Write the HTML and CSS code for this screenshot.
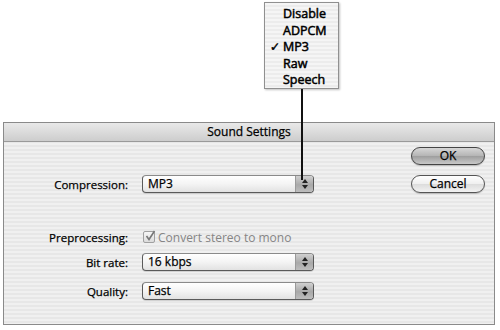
FILE: index.html
```html
<!DOCTYPE html>
<html>
<head>
<meta charset="utf-8">
<link rel="stylesheet" href="styles.css">
</head>
<body>
<div class="page">
  <div class="window">
    <div class="titlebar">Sound Settings</div>
    <div class="content">
      <div class="form">
        <div class="row comp">
          <div class="label">Compression:</div>
          <div class="popup"><span class="value">MP3</span><span class="stepper"><svg width="8" height="12" viewBox="0 0 8 12"><path d="M4 1 L7 5 L1 5 Z M4 11 L7 7 L1 7 Z" fill="#222"/></svg></span></div>
        </div>
        <div class="row prep">
          <div class="label">Preprocessing:</div>
          <div class="check"><span class="box"><svg width="12" height="12" viewBox="0 0 12 12"><path d="M2.5 6 L5 9.5 L10.5 1" fill="none" stroke="#777" stroke-width="1.6"/></svg></span><span class="checktext">Convert stereo to mono</span></div>
        </div>
        <div class="row bit">
          <div class="label">Bit rate:</div>
          <div class="popup"><span class="value">16 kbps</span><span class="stepper"><svg width="8" height="12" viewBox="0 0 8 12"><path d="M4 1 L7 5 L1 5 Z M4 11 L7 7 L1 7 Z" fill="#222"/></svg></span></div>
        </div>
        <div class="row qual">
          <div class="label">Quality:</div>
          <div class="popup"><span class="value">Fast</span><span class="stepper"><svg width="8" height="12" viewBox="0 0 8 12"><path d="M4 1 L7 5 L1 5 Z M4 11 L7 7 L1 7 Z" fill="#222"/></svg></span></div>
        </div>
      </div>
      <div class="buttons">
        <div class="btn default">OK</div>
        <div class="btn">Cancel</div>
      </div>
    </div>
  </div>
  <div class="menu">
    <div class="item">Disable</div>
    <div class="item">ADPCM</div>
    <div class="item checked"><span class="mark">✓</span>MP3</div>
    <div class="item">Raw</div>
    <div class="item">Speech</div>
  </div>
  <div class="connector"></div>
</div>
</body>
</html>
```

FILE: styles.css
```css
html, body {
  margin: 0;
  padding: 0;
  background: #ffffff;
}
body {
  font-family: "Open Sans", "DejaVu Sans", sans-serif;
  font-size: 11.5px;
  color: #111;
}
.page {
  position: relative;
  width: 500px;
  height: 330px;
  overflow: hidden;
}
.window {
  box-sizing: border-box;
  margin: 122px 0 0 3px;
  width: 492px;
  height: 203px;
  border: 1px solid #8a8a8a;
  background: repeating-linear-gradient(to bottom, #f0f0f0 0px, #f0f0f0 2px, #e7e7e7 2px, #e7e7e7 4px);
}
.titlebar {
  height: 18px;
  line-height: 18px;
  text-align: center;
  font-size: 12px;
  color: #000;
  -webkit-text-stroke: 0.25px #000;
  background: linear-gradient(to bottom, #e9e9e9, #cdcdcd);
  border-bottom: 1px solid #9a9a9a;
}
.content {
  display: flex;
  justify-content: space-between;
}
.form {
  display: flex;
  flex-direction: column;
}
.row {
  display: flex;
  align-items: center;
  height: 18px;
}
.row.comp { margin-top: 33px; }
.row.prep { margin-top: 35px; }
.row.bit { margin-top: 7px; }
.row.qual { margin-top: 11px; }
.label {
  width: 124px;
  margin-right: 14px;
  text-align: right;
  color: #000;
  -webkit-text-stroke: 0.25px #000;
}
.popup {
  box-sizing: border-box;
  width: 172px;
  height: 18px;
  display: flex;
  align-items: stretch;
  border: 1px solid #5a5a5a;
  border-top-color: #8a8a8a;
  border-radius: 4px;
  background: linear-gradient(to bottom, #ffffff 0%, #f4f4f4 50%, #e2e2e2 100%);
  box-shadow: 0 1px 0 rgba(0,0,0,0.12);
  overflow: hidden;
}
.popup .value {
  flex: 1;
  padding-left: 5px;
  line-height: 16px;
  color: #000;
  font-size: 12px;
  -webkit-text-stroke: 0.25px #000;
}
.stepper {
  width: 17px;
  display: flex;
  align-items: center;
  justify-content: center;
  background: linear-gradient(to bottom, #d0d0d0, #a9a9a9 55%, #bdbdbd);
  border-left: 1px solid #9a9a9a;
}
.check {
  display: flex;
  align-items: center;
}
.box {
  box-sizing: border-box;
  width: 12px;
  height: 12px;
  margin-left: 1px;
  border: 1px solid #a0a0a0;
  border-radius: 2px;
  background: linear-gradient(to bottom, #f6f6f6, #dcdcdc);
  display: flex;
  align-items: center;
  justify-content: center;
  overflow: visible;
}
.box svg {
  flex: none;
  margin-top: -3px;
  margin-left: 1px;
}
.checktext {
  margin-left: 3px;
  color: #858585;
  font-size: 12px;
}
.buttons {
  display: flex;
  flex-direction: column;
  gap: 10px;
  padding-top: 5px;
  margin-right: 9px;
}
.btn {
  box-sizing: border-box;
  width: 74px;
  height: 18px;
  line-height: 16px;
  text-align: center;
  border: 1px solid #555;
  border-radius: 9px;
  font-size: 12px;
  color: #000;
  -webkit-text-stroke: 0.25px #000;
  background: linear-gradient(to bottom, #ffffff 0%, #efefef 50%, #dcdcdc 51%, #f2f2f2 100%);
  box-shadow: 0 1px 1px rgba(0,0,0,0.2);
}
.btn.default {
  background: linear-gradient(to bottom, #d6d6d6 0%, #b4b4b4 50%, #9e9e9e 51%, #c8c8c8 100%);
  border-color: #444;
}
.menu {
  position: absolute;
  left: 264px;
  top: 2px;
  box-sizing: border-box;
  width: 75px;
  height: 87px;
  padding-top: 3px;
  border: 1px solid #909090;
  background: repeating-linear-gradient(to bottom, #f5f5f5 0px, #f5f5f5 2px, #ececec 2px, #ececec 4px);
  box-shadow: 1px 1px 2px rgba(0,0,0,0.25);
}
.item {
  position: relative;
  height: 16.5px;
  line-height: 16.5px;
  padding-left: 18px;
  font-size: 12.5px;
  color: #000;
  -webkit-text-stroke: 0.5px #000;
}
.mark {
  position: absolute;
  left: 5px;
  top: 0;
  font-family: "DejaVu Sans", sans-serif;
  font-size: 12px;
}
.connector {
  position: absolute;
  left: 301px;
  top: 89px;
  width: 2px;
  height: 91px;
  background: #111;
}
```
